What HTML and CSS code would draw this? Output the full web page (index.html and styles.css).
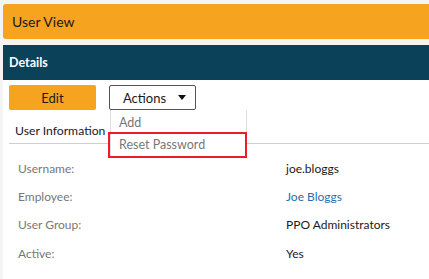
FILE: index.html
```html
<!DOCTYPE html>
<html lang="en">
<head>
<meta charset="utf-8">
<title>User View</title>
<link rel="stylesheet" href="styles.css">
</head>
<body>
<div class="page">
  <div class="title-bar">User View</div>
  <div class="panel">
    <div class="panel-head">Details</div>
    <div class="panel-body">
      <div class="toolbar">
        <button class="btn btn-edit" type="button">Edit</button>
        <div class="dropdown">
          <button class="btn btn-actions" type="button">Actions <span class="caret"></span></button>
          <ul class="menu">
            <li class="menu-item">Add</li>
            <li class="menu-item menu-item-marked">Reset Password</li>
          </ul>
        </div>
      </div>
      <div class="section-title">User Information</div>
      <div class="rows">
        <div class="row"><span class="label">Username:</span><span class="value">joe.bloggs</span></div>
        <div class="row"><span class="label">Employee:</span><span class="value link">Joe Bloggs</span></div>
        <div class="row"><span class="label">User Group:</span><span class="value">PPO Administrators</span></div>
        <div class="row"><span class="label">Active:</span><span class="value">Yes</span></div>
      </div>
    </div>
  </div>
</div>
</body>
</html>
```
FILE: styles.css
```css
* { box-sizing: border-box; }
html, body {
  margin: 0;
  padding: 0;
  background: #f4f4f4;
  font-family: Lato, "Open Sans", "Liberation Sans", sans-serif;
  font-size: 12px;
  color: #222;
}
.page {
  padding: 4px 0 0 3px;
  height: 279px;
  overflow: hidden;
}
.title-bar {
  height: 35px;
  background: #f6a320;
  border-radius: 3px 0 0 3px;
  padding-left: 9px;
  font-size: 14px;
  line-height: 35px;
  color: #1a1a1a;
}
.panel {
  margin-top: 6px;
  background: #fff;
  height: 240px;
}
.panel-head {
  height: 35px;
  background: #0b4159;
  color: #fff;
  font-weight: 700;
  font-size: 12.5px;
  line-height: 35px;
  padding-left: 6px;
}
.panel-body {
  position: relative;
}
.toolbar {
  display: flex;
  gap: 13px;
  padding: 5px 0 0 6px;
  height: 30px;
}
.btn {
  font-family: inherit;
  font-size: 13px;
  height: 25px;
  width: 87px;
  border-radius: 2px;
  margin: 0;
  padding: 0;
  cursor: pointer;
}
.btn-edit {
  background: #f6a320;
  border: none;
  color: #1a1a1a;
}
.dropdown {
  position: relative;
}
.btn-actions {
  background: #fff;
  border: 1px solid #555;
  color: #1a1a1a;
  display: flex;
  align-items: center;
  justify-content: center;
  gap: 12px;
  padding-left: 4px;
}
.caret {
  display: inline-block;
  width: 0;
  height: 0;
  border-left: 4px solid transparent;
  border-right: 4px solid transparent;
  border-top: 5px solid #111;
}
.menu {
  position: absolute;
  top: 25px;
  left: 1px;
  width: 137px;
  margin: 0;
  padding: 2px 0 0;
  list-style: none;
  background: #fff;
  border: 1px solid #ddd;
  border-top: none;
  border-radius: 0 0 3px 3px;
  z-index: 5;
}
.menu-item {
  color: #777;
  font-size: 12.5px;
  height: 21px;
  line-height: 21px;
  padding-left: 8px;
}
.menu-item-marked {
  height: 24px;
  line-height: 24px;
  outline: 2px solid #ee1c24;
  outline-offset: -1px;
  margin-left: -2px;
  padding-left: 10px;
}
.section-title {
  margin-left: 6px;
  padding-left: 6px;
  height: 34px;
  line-height: 16px;
  padding-top: 13px;
  border-bottom: 1px solid #cfcfcf;
  font-size: 12.2px;
  color: #1a1a1a;
}
.rows {
  padding-top: 10px;
}
.row {
  display: flex;
  height: 28.3px;
  align-items: center;
  padding-left: 15px;
}
.label {
  width: 268px;
  color: #777;
}
.value {
  color: #1a1a1a;
}
.link {
  color: #1f6fb5;
}
```
